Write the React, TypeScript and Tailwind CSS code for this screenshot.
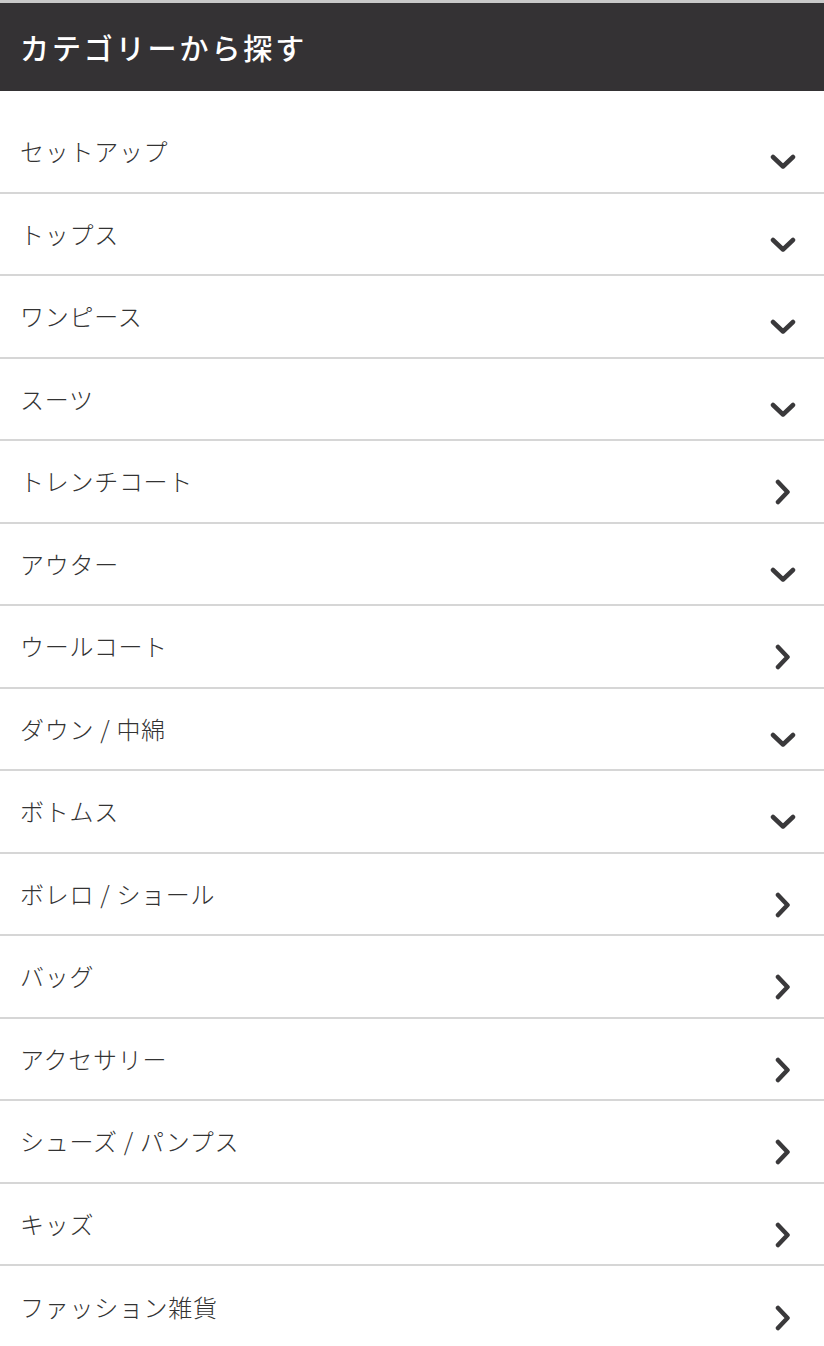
import React from 'react';

type Category = {
  name: string;
  expandable: boolean;
};

const categories: Category[] = [
  { name: 'セットアップ', expandable: true },
  { name: 'トップス', expandable: true },
  { name: 'ワンピース', expandable: true },
  { name: 'スーツ', expandable: true },
  { name: 'トレンチコート', expandable: false },
  { name: 'アウター', expandable: true },
  { name: 'ウールコート', expandable: false },
  { name: 'ダウン / 中綿', expandable: true },
  { name: 'ボトムス', expandable: true },
  { name: 'ボレロ / ショール', expandable: false },
  { name: 'バッグ', expandable: false },
  { name: 'アクセサリー', expandable: false },
  { name: 'シューズ / パンプス', expandable: false },
  { name: 'キッズ', expandable: false },
  { name: 'ファッション雑貨', expandable: false },
];

function ChevronDown() {
  return (
    <svg width="26" height="16" viewBox="0 0 26 16" className="text-[#3a393b]">
      <polyline
        points="3,3 13,12.5 23,3"
        fill="none"
        stroke="currentColor"
        strokeWidth="4.5"
        strokeLinecap="round"
        strokeLinejoin="round"
      />
    </svg>
  );
}

function ChevronRight() {
  return (
    <svg width="16" height="26" viewBox="0 0 16 26" className="text-[#3a393b]">
      <polyline
        points="3,3 12.5,13 3,23"
        fill="none"
        stroke="currentColor"
        strokeWidth="4.5"
        strokeLinecap="round"
        strokeLinejoin="round"
      />
    </svg>
  );
}

export default function App() {
  return (
    <div
      className="w-[824px] h-[1346px] overflow-hidden bg-white"
      style={{ fontFamily: '"Noto Sans CJK JP", "Noto Sans", sans-serif' }}
    >
      {/* Header */}
      <div className="border-t-[3px] border-[#c9c9c9] bg-[#343234] h-[91px] flex items-center px-5">
        <h2 className="text-white text-[29px] font-medium tracking-[0.1em] leading-none">
          カテゴリーから探す
        </h2>
      </div>

      {/* Category list */}
      <ul className="pt-5">
        {categories.map((cat, i) => (
          <li
            key={cat.name}
            className={`h-[82.5px] flex items-center justify-between pl-5 pr-[28px] ${
              i < categories.length - 1 ? 'border-b-2 border-[#d6d6d6]' : ''
            }`}
          >
            <span className="text-[24px] font-light text-[#333] tracking-[0.03em]">{cat.name}</span>
            <span className="w-[26px] flex justify-center mt-[22px]">
              {cat.expandable ? <ChevronDown /> : <ChevronRight />}
            </span>
          </li>
        ))}
      </ul>
    </div>
  );
}
